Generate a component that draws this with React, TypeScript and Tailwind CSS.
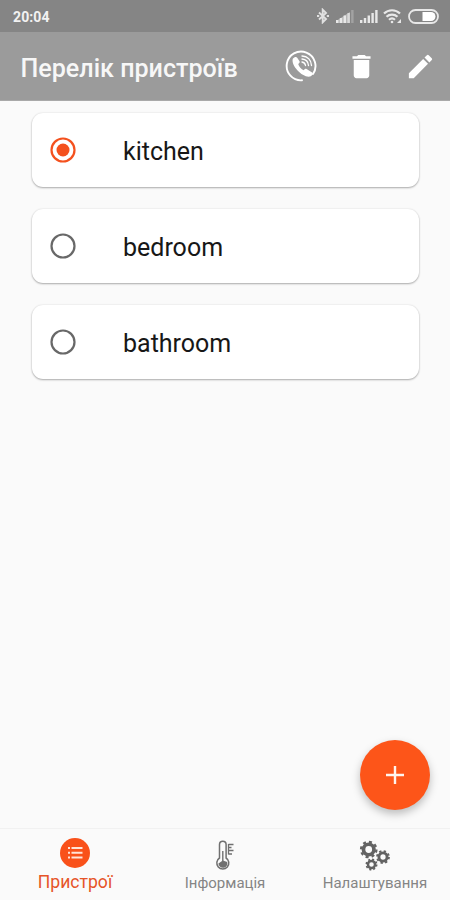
import React, { useState } from 'react';

const devices = ['kitchen', 'bedroom', 'bathroom'];

function Signal({ faded }: { faded?: boolean }) {
  return (
    <svg className="w-[18px] h-[13px]" viewBox="0 0 18 13" fill="#e8e8e8">
      <path d="M0 10h2.400v3H0z" />
      <path d="M3.800 8h2.400v5H3.800z" />
      <path d="M7.600 5.500H10V13H7.600z" />
      <path d="M11.400 3h2.400v10h-2.400z" opacity={faded ? 0.7 : 1} />
      <path d="M15.200 0h2.400v13h-2.400z" opacity={faded ? 0.3 : 1} />
      {faded && <path d="M0 13V11L14 2v11z" opacity="0.5" />}
    </svg>
  );
}

function StatusBar() {
  return (
    <div className="h-8 bg-[#858585] flex items-center justify-between pl-[13px] pr-[11px]">
      <span className="mt-[2px] text-[14px] font-bold text-[#f2f2f2] tracking-[0.1px]">20:04</span>
      <div className="flex items-center">
        <svg className="w-[14px] h-4 mr-[6px]" viewBox="0 0 14 16" fill="none" stroke="#e0e0e0" strokeWidth="1.9">
          <path d="M3 4.500l7 6.500-3.300 3.300V1.700L10 5l-7 6.500" />
          <path d="M1 8h2.200M10.800 8H13" strokeWidth="2.200" />
        </svg>
        <Signal faded />
        <div className="w-[6px]" />
        <Signal />
        <svg className="w-5 h-4 ml-[5px] mr-[5px]" viewBox="0 0 20 16" fill="none" stroke="#e8e8e8" strokeWidth="2.200">
          <path d="M1 5.500a11.500 11.500 0 0 1 16 0" />
          <path d="M3.500 8.800a8 8 0 0 1 11 0" />
          <path d="M6 11.800a4.500 4.500 0 0 1 6 0" />
          <circle cx="9" cy="14" r="1.300" fill="#e8e8e8" stroke="none" />
          <path d="M18 11v4h-4z" fill="#e8e8e8" stroke="none" />
        </svg>
        <svg className="w-[31px] h-[15px]" viewBox="0 0 31 15">
          <rect x="1" y="1" width="29" height="13" rx="6.500" fill="none" stroke="#e8e8e8" strokeWidth="1.800" />
          <path d="M14.500 3H23a4.500 4.500 0 0 1 0 9h-8.500z" fill="#fff" />
        </svg>
      </div>
    </div>
  );
}

function CallIcon() {
  return (
    <svg className="w-8 h-8" viewBox="0 0 32 32" fill="none" stroke="#fff">
      <path d="M17 30.300A14.400 14.400 0 1 1 28 24" strokeWidth="1.900" strokeLinecap="round" />
      <path d="M7.800 8.800c1.600-1.900 3.500-2.400 4.400-1l2.300 3.400c.5.800.2 1.600-1.300 2.800.8 2.700 3 5 5.500 6.300 1.400-1.400 2-1.700 2.900-1.200l5.500 3.500c1.400 1.100.6 2.500-1.300 3.700-6.400 3-20.200-10-18-17.500z" fill="#fff" stroke="none" />
      <path d="M17 12c2 .3 3.200 1.600 3.500 3.500M17 9c3.700.3 6.200 2.800 6.500 6.500M17 6c5.500.3 9.200 4 9.500 9.500" strokeWidth="1.300" strokeLinecap="round" />
    </svg>
  );
}

function Header() {
  return (
    <div className="h-[69px] bg-[#9b9b9b] border-b border-[#a9a9a9] flex items-center justify-between pl-[20.500px] pr-[14.500px]">
      <h1 className="mt-[5px] text-[25.1px] font-medium text-[#f7f7f7] whitespace-nowrap">Перелік пристроїв</h1>
      <div className="flex items-center">
        <button className="mr-[29px]"><CallIcon /></button>
        <button className="mr-[28px]">
          <svg className="w-[31px] h-[31px]" viewBox="0 0 24 24" fill="#fff">
            <path d="M6 19c0 1.100.9 2 2 2h8c1.100 0 2-.9 2-2V7H6v12zM19 4h-3.500l-1-1h-5l-1 1H5v2h14V4z" />
          </svg>
        </button>
        <button>
          <svg className="w-[31px] h-[31px]" viewBox="0 0 24 24" fill="#fff">
            <path d="M3 17.250V21h3.750L17.810 9.940l-3.750-3.750L3 17.250zM20.710 7.040a1 1 0 0 0 0-1.410l-2.340-2.340a1 1 0 0 0-1.410 0l-1.830 1.830 3.750 3.750 1.830-1.830z" />
          </svg>
        </button>
      </div>
    </div>
  );
}

function Radio({ checked }: { checked: boolean }) {
  return (
    <svg className="w-[26px] h-[26px]" viewBox="0 0 26 26" fill="none">
      <circle cx="13" cy="13" r="11.500" stroke={checked ? '#f4511e' : '#686868'} strokeWidth="2.200" />
      {checked && <circle cx="13" cy="13" r="6.500" fill="#f4511e" />}
    </svg>
  );
}

function Gear({ cx, cy, r }: { cx: number; cy: number; r: number }) {
  const tooth = (Math.PI * r * 2) / 16;
  return (
    <g fill="none" stroke="#626262">
      <circle cx={cx} cy={cy} r={r * 0.68} strokeWidth={r * 0.48} />
      <circle cx={cx} cy={cy} r={r} strokeWidth={r * 0.3} strokeDasharray={`${tooth} ${tooth}`} />
    </g>
  );
}

function BottomNav() {
  return (
    <nav className="h-[72px] bg-[#fafafa] border-t border-[#f1f1f1] grid grid-cols-3">
      <button className="flex flex-col items-center pt-[9px]">
        <svg className="w-[30px] h-[30px]" viewBox="0 0 30 30">
          <circle cx="15" cy="15" r="15" fill="#f9511a" />
          <path d="M8 10h2M8 14.700h2M8 19.400h2M11.500 10h11M11.500 14.700h11M11.500 19.400h11" stroke="#ffe4d8" strokeWidth="2" />
        </svg>
        <span className="mt-[3px] text-[17.6px] leading-[22px] text-[#e65428]">Пристрої</span>
      </button>
      <button className="flex flex-col items-center pt-[11px]">
        <svg className="w-[20px] h-[31px]" viewBox="0 0 20 31" fill="none" stroke="#707070">
          <path d="M4.500 18V4.500a3.300 3.300 0 0 1 6.600 0V18a6 6 0 1 1-6.600 0z" strokeWidth="1.500" />
          <path d="M7.800 11v10" strokeWidth="1.400" />
          <path d="M3.400 23.500l4.400-3 4.400 1.500a4.500 4.500 0 1 1-8.800 1.500z" fill="#707070" stroke="none" />
          <path d="M13.500 4.500h5M13.500 7.500h3M13.500 10.500h5M13.500 14h3.500M13.500 4v10.500" strokeWidth="1.300" />
        </svg>
        <span className="mt-px text-[15px] leading-[22px] text-[#858585]">Інформація</span>
      </button>
      <button className="flex flex-col items-center pt-[11px]">
        <svg className="w-[32px] h-[31px]" viewBox="0 0 32 31">
          <Gear cx={9.700} cy={9.500} r={7.700} />
          <Gear cx={24} cy={17} r={6} />
          <Gear cx={12.500} cy={24.500} r={5.200} />
        </svg>
        <span className="mt-px text-[15px] leading-[22px] text-[#858585]">Налаштування</span>
      </button>
    </nav>
  );
}

export default function App() {
  const [selected, setSelected] = useState('kitchen');

  return (
    <div className="w-[450px] h-[900px] bg-[#fafafa] flex flex-col relative overflow-hidden font-['Roboto',sans-serif]">
      <StatusBar />
      <Header />

      <main className="flex-1 pt-3 pl-8 pr-[31px] space-y-[22.2px]">
        {devices.map((name) => (
          <div
            key={name}
            onClick={() => setSelected(name)}
            className="h-[74px] bg-white rounded-[11px] flex items-center pl-[18px] cursor-pointer shadow-[0_1px_2px_rgba(0,0,0,0.3),0_0_2px_rgba(0,0,0,0.1)]"
          >
            <Radio checked={selected === name} />
            <span className="ml-[47px] mt-[3px] text-[25px] text-[#171717]">{name}</span>
          </div>
        ))}
      </main>

      <button className="absolute right-5 bottom-[90px] w-[70px] h-[70px] rounded-full bg-[#fd5519] flex items-center justify-center shadow-[0_4px_8px_rgba(0,0,0,0.25)]">
        <svg className="w-[18px] h-[18px]" viewBox="0 0 18 18" stroke="#fff4ee" strokeWidth="2.400">
          <path d="M9 0v18M0 9h18" />
        </svg>
      </button>

      <BottomNav />
    </div>
  );
}
